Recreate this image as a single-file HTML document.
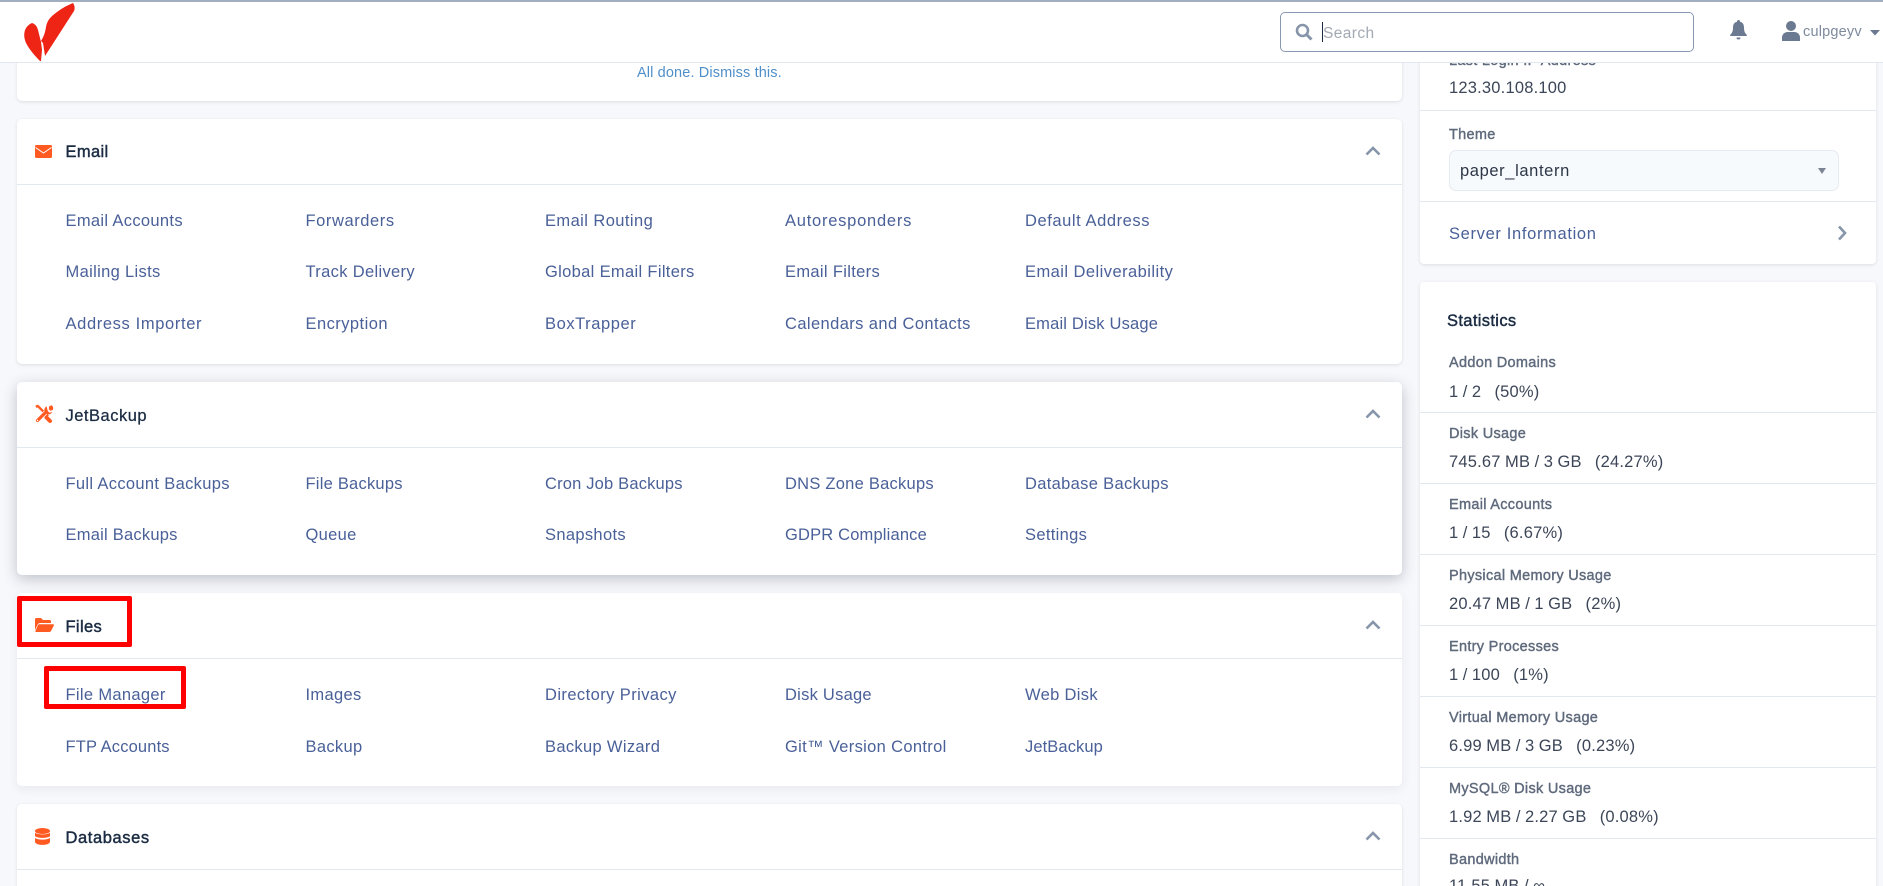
<!DOCTYPE html>
<html lang="en"><head><meta charset="utf-8"><title>cPanel</title>
<style>
*{box-sizing:border-box}
html,body{margin:0;padding:0;width:1883px;height:886px;overflow:hidden;background:#f7f8fb;font-family:"Liberation Sans",sans-serif}
#root{position:relative;width:1883px;height:886px;overflow:hidden;background:#f7f8fb}
.a{position:absolute;white-space:nowrap;line-height:20px}
.panel{position:absolute;left:17px;width:1385px;background:#fff;border-radius:5px;box-shadow:0 1px 3px rgba(40,50,80,.13)}
.hr{position:absolute;height:1px;background:#e2e8f0}
.h{font-size:16.5px;color:#1a2b42;letter-spacing:.35px;left:65.5px;margin-top:1px;-webkit-text-stroke:.45px #1a2b42}
.l{font-size:16.5px;color:#4a6098;letter-spacing:.33px;margin-top:1px}
.sl{font-size:14.5px;color:#5f6a7c;left:1449px;letter-spacing:.3px;margin-top:1px;-webkit-text-stroke:.4px #5f6a7c}
.sv{font-size:16.5px;color:#3c4658;left:1449px;letter-spacing:.2px;word-spacing:-.4px;margin-top:1px}
.red{position:absolute;border:5px solid #fe0000;border-radius:2px}
svg{position:absolute;overflow:visible}
</style></head><body><div id="root">

<div class="panel" style="top:40px;height:61px"></div>
<div class="a" style="left:637px;top:63px;font-size:14.5px;color:#4f8fc9;letter-spacing:.13px">All done. Dismiss this.</div>

<div class="panel" style="top:119px;height:245px"></div>
<div class="hr" style="left:17px;top:184px;width:1385px"></div>
<svg style="left:35px;top:145px" width="17" height="13" viewBox="0 0 17 13"><rect width="17" height="13" rx="1.5" fill="#ff5a22"/><path d="M0.5 2.5 L8.5 8 L16.5 2.5" fill="none" stroke="#fff" stroke-width="1"/></svg>
<div class="a h" style="top:141px">Email</div>
<svg style="left:1365px;top:146px" width="16" height="10" viewBox="0 0 16 10"><path d="M1.5 8.5L8 2l6.5 6.5" fill="none" stroke="#8795ab" stroke-width="2.6"/></svg>
<div class="a l" style="left:65.5px;top:210px">Email Accounts</div>
<div class="a l" style="left:305.5px;top:210px;letter-spacing:.57px">Forwarders</div>
<div class="a l" style="left:545px;top:210px;letter-spacing:.42px">Email Routing</div>
<div class="a l" style="left:785px;top:210px;letter-spacing:.76px">Autoresponders</div>
<div class="a l" style="left:1025px;top:210px;letter-spacing:.57px">Default Address</div>
<div class="a l" style="left:65.5px;top:261px">Mailing Lists</div>
<div class="a l" style="left:305.5px;top:261px">Track Delivery</div>
<div class="a l" style="left:545px;top:261px">Global Email Filters</div>
<div class="a l" style="left:785px;top:261px">Email Filters</div>
<div class="a l" style="left:1025px;top:261px;letter-spacing:.45px">Email Deliverability</div>
<div class="a l" style="left:65.5px;top:313px;letter-spacing:.63px">Address Importer</div>
<div class="a l" style="left:305.5px;top:313px;letter-spacing:.45px">Encryption</div>
<div class="a l" style="left:545px;top:313px;letter-spacing:.57px">BoxTrapper</div>
<div class="a l" style="left:785px;top:313px;letter-spacing:.4px">Calendars and Contacts</div>
<div class="a l" style="left:1025px;top:313px;letter-spacing:.18px">Email Disk Usage</div>

<div class="panel" style="top:382px;height:193px;box-shadow:0 4px 14px rgba(45,55,85,.28)"></div>
<div class="hr" style="left:17px;top:447px;width:1385px"></div>
<svg style="left:35px;top:406px" width="18" height="17" viewBox="0 0 18 17"><path d="M0.800 0.800L2.800 0 6 3.200 13 10.200" fill="none" stroke="#ff5a22" stroke-width="2.400"/><path d="M11.500 11.500L15 15" fill="none" stroke="#ff5a22" stroke-width="4" stroke-linecap="round"/><path d="M2.500 14.500L11 6" fill="none" stroke="#fff" stroke-width="4.600"/><path d="M2.500 14.500L11 6" fill="none" stroke="#ff5a22" stroke-width="3.200" stroke-linecap="round"/><path d="M11.200 1.200a4.200 4.200 0 1 0 5.600 5.600L14 7.500 12.500 6 11.800 4Z" fill="#ff5a22" transform="translate(.5 -.8)"/><path d="M14.200 .3L16.600 -.8A4 4 0 0 1 17.800 4L15.400 4.800 13.800 3.200Z" fill="#ff5a22"/><circle cx="2.500" cy="14.500" r=".7" fill="#fff"/></svg>
<div class="a h" style="top:405px;letter-spacing:.5px;-webkit-text-stroke:.25px #1a2b42">JetBackup</div>
<svg style="left:1365px;top:409px" width="16" height="10" viewBox="0 0 16 10"><path d="M1.5 8.5L8 2l6.5 6.5" fill="none" stroke="#8795ab" stroke-width="2.6"/></svg>
<div class="a l" style="left:65.5px;top:473px">Full Account Backups</div>
<div class="a l" style="left:305.5px;top:473px;letter-spacing:.23px">File Backups</div>
<div class="a l" style="left:545px;top:473px;letter-spacing:.18px">Cron Job Backups</div>
<div class="a l" style="left:785px;top:473px;letter-spacing:.25px">DNS Zone Backups</div>
<div class="a l" style="left:1025px;top:473px">Database Backups</div>
<div class="a l" style="left:65.5px;top:524px;letter-spacing:.23px">Email Backups</div>
<div class="a l" style="left:305.5px;top:524px">Queue</div>
<div class="a l" style="left:545px;top:524px">Snapshots</div>
<div class="a l" style="left:785px;top:524px;letter-spacing:.17px">GDPR Compliance</div>
<div class="a l" style="left:1025px;top:524px">Settings</div>

<div class="panel" style="top:593px;height:193px;box-shadow:0 3px 10px rgba(45,55,85,.08)"></div>
<div class="hr" style="left:17px;top:658px;width:1385px"></div>
<svg style="left:35px;top:618px" width="19" height="14" viewBox="0 0 19 14"><path d="M0 12V1.5A1.5 1.5 0 0 1 1.500 0H6l2 2h6.500A1.500 1.500 0 0 1 16 3.500V5H5a2.500 2.500 0 0 0-2.200 1.300Z" fill="#ff5a22"/><path d="M4 6.200h14.200a.8.8 0 0 1 .7 1.200L16 13a2 2 0 0 1-1.700 1H1a.7.7 0 0 1-.6-1L3 7a1.500 1.500 0 0 1 1-.8Z" fill="#ff5a22"/></svg>
<div class="a h" style="top:616px">Files</div>
<svg style="left:1365px;top:620px" width="16" height="10" viewBox="0 0 16 10"><path d="M1.5 8.5L8 2l6.500 6.500" fill="none" stroke="#8795ab" stroke-width="2.6"/></svg>
<div class="a l" style="left:65.5px;top:684px">File Manager</div>
<div class="a l" style="left:305.5px;top:684px">Images</div>
<div class="a l" style="left:545px;top:684px;letter-spacing:.42px">Directory Privacy</div>
<div class="a l" style="left:785px;top:684px;letter-spacing:.25px">Disk Usage</div>
<div class="a l" style="left:1025px;top:684px">Web Disk</div>
<div class="a l" style="left:65.5px;top:736px;letter-spacing:.15px">FTP Accounts</div>
<div class="a l" style="left:305.5px;top:736px">Backup</div>
<div class="a l" style="left:545px;top:736px">Backup Wizard</div>
<div class="a l" style="left:785px;top:736px">Git™ Version Control</div>
<div class="a l" style="left:1025px;top:736px;letter-spacing:.1px">JetBackup</div>

<div class="panel" style="top:804px;height:120px"></div>
<div class="hr" style="left:17px;top:869px;width:1385px"></div>
<svg style="left:35px;top:828px" width="15" height="17" viewBox="0 0 15 17"><ellipse cx="7.500" cy="3" rx="7.500" ry="3" fill="#ff5a22"/><path d="M0 4.500C2 7 13 7 15 4.500V8C13 10.500 2 10.500 0 8Z" fill="#ff5a22"/><path d="M0 9.800C2 12.300 13 12.300 15 9.800V14c-1 3.900-14 3.900-15 0Z" fill="#ff5a22"/></svg>
<div class="a h" style="top:827px;letter-spacing:.6px">Databases</div>
<svg style="left:1365px;top:831px" width="16" height="10" viewBox="0 0 16 10"><path d="M1.5 8.5L8 2l6.500 6.500" fill="none" stroke="#8795ab" stroke-width="2.6"/></svg>

<div class="red" style="left:17px;top:596px;width:115px;height:51px"></div>
<div class="red" style="left:44px;top:666px;width:142px;height:43px"></div>

<div class="a" style="left:1420px;top:0;width:456px;height:264px;background:#fff;border-radius:4px;box-shadow:0 1px 3px rgba(40,50,80,.13)"></div>
<div class="a" style="left:1449px;top:51px;font-size:14.5px;color:#5f6a7c;letter-spacing:.3px;-webkit-text-stroke:.4px #5f6a7c">Last Login IP Address</div>
<div class="a sv" style="top:77px">123.30.108.100</div>
<div class="hr" style="left:1420px;top:110px;width:456px"></div>
<div class="a sl" style="top:124px">Theme</div>
<div class="a" style="left:1449px;top:150px;width:390px;height:41px;background:#f7fafc;border:1px solid #e6eaf1;border-radius:7px"></div>
<div class="a" style="left:1460px;top:161px;font-size:16.5px;color:#2d3748;letter-spacing:.62px">paper_lantern</div>
<svg style="left:1818px;top:168px" width="8" height="6" viewBox="0 0 8 6"><path d="M0 0H8L4 6Z" fill="#7b8494"/></svg>
<div class="hr" style="left:1420px;top:201px;width:456px"></div>
<div class="a l" style="left:1449px;top:223px;letter-spacing:.66px">Server Information</div>
<svg style="left:1837px;top:225px" width="10" height="16" viewBox="0 0 10 16"><path d="M2 1.500L8 8l-6 6.500" fill="none" stroke="#8795ab" stroke-width="2.6"/></svg>

<div class="a" style="left:1420px;top:282px;width:456px;height:640px;background:#fff;border-radius:4px;box-shadow:0 1px 3px rgba(40,50,80,.13)"></div>
<div class="a" style="left:1447px;top:311px;font-size:16.5px;color:#1a2b42;letter-spacing:.35px;-webkit-text-stroke:.45px #1a2b42">Statistics</div>

<div class="a sl" style="top:352px">Addon Domains</div>
<div class="a sv" style="top:381px">1 / 2 &nbsp; (50%)</div>
<div class="hr" style="left:1420px;top:412px;width:456px"></div>
<div class="a sl" style="top:423px">Disk Usage</div>
<div class="a sv" style="top:451px">745.67 MB / 3 GB &nbsp; (24.27%)</div>
<div class="hr" style="left:1420px;top:483px;width:456px"></div>
<div class="a sl" style="top:494px">Email Accounts</div>
<div class="a sv" style="top:522px">1 / 15 &nbsp; (6.67%)</div>
<div class="hr" style="left:1420px;top:554px;width:456px"></div>
<div class="a sl" style="top:565px">Physical Memory Usage</div>
<div class="a sv" style="top:593px">20.47 MB / 1 GB &nbsp; (2%)</div>
<div class="hr" style="left:1420px;top:625px;width:456px"></div>
<div class="a sl" style="top:636px">Entry Processes</div>
<div class="a sv" style="top:664px">1 / 100 &nbsp; (1%)</div>
<div class="hr" style="left:1420px;top:696px;width:456px"></div>
<div class="a sl" style="top:707px">Virtual Memory Usage</div>
<div class="a sv" style="top:735px">6.99 MB / 3 GB &nbsp; (0.23%)</div>
<div class="hr" style="left:1420px;top:767px;width:456px"></div>
<div class="a sl" style="top:778px">MySQL® Disk Usage</div>
<div class="a sv" style="top:806px">1.92 MB / 2.27 GB &nbsp; (0.08%)</div>
<div class="hr" style="left:1420px;top:838px;width:456px"></div>
<div class="a sl" style="top:849px">Bandwidth</div>
<div class="a sv" style="top:875px">11.55 MB / ∞</div>

<div class="a" style="left:0;top:0;width:1883px;height:63px;background:#fff;border-top:2px solid #a0aec0;border-bottom:1px solid #e2e8f0"></div>
<svg style="left:0;top:0" width="90" height="63" viewBox="0 0 90 63"><path d="M73 3C75 6 75 9 74 11L45 56 43 43 41 41C44 36 45 33 46 27 47 21 50 17 57 12 62 8 68 5 73 3Z" fill="#ee2415"/><path d="M32 23C35 24 37 26 38 30L41 42 42 50 41 61 40 61C33 54 26 45 25 40 23 33 25 26 32 23Z" fill="#ee2415"/></svg>
<div class="a" style="left:1280px;top:12px;width:414px;height:40px;border:1.5px solid #8a99b2;border-radius:5px;background:#fff"></div>
<svg style="left:1295px;top:23px" width="18" height="18" viewBox="0 0 18 18"><circle cx="7.500" cy="7.500" r="5.500" fill="none" stroke="#8795ab" stroke-width="2.6"/><path d="M11.500 11.500L16.500 16.500" stroke="#8795ab" stroke-width="3"/></svg>
<div class="a" style="left:1322px;top:22px;width:1px;height:20px;background:#1a2b42"></div>
<div class="a" style="left:1323px;top:24px;font-size:15.5px;color:#a3a9b3;letter-spacing:.4px">Search</div>
<svg style="left:1730px;top:20px" width="17" height="20" viewBox="0 0 17 20"><path d="M8.500 0a1.500 1.500 0 0 1 1.500 1.700C12.800 2.300 14 4.500 14 7.500c0 4 1 5.500 2.700 7.300.5.600.2 1.200-.5 1.200H.8c-.7 0-1-.6-.5-1.200C2 13 3 11.500 3 7.500c0-3 1.200-5.200 4-5.800A1.500 1.500 0 0 1 8.500 0Z" fill="#6b7a90"/><path d="M6.500 17.500h4a2 2 0 0 1-4 0Z" fill="#6b7a90"/></svg>
<svg style="left:1782px;top:21px" width="18" height="20" viewBox="0 0 18 20"><circle cx="9" cy="5" r="5" fill="#6b7a90"/><path d="M0 20v-3.500C0 13.500 2.500 11 5.500 11h7c3 0 5.500 2.500 5.500 5.500V20Z" fill="#6b7a90"/></svg>
<div class="a" style="left:1803px;top:22px;font-size:14.5px;color:#7d8a9e;letter-spacing:.2px">culpgeyv</div>
<svg style="left:1870px;top:30px" width="10" height="6" viewBox="0 0 10 6"><path d="M0 0H10L5 5.500Z" fill="#6b7a90"/></svg>
</div></body></html>
